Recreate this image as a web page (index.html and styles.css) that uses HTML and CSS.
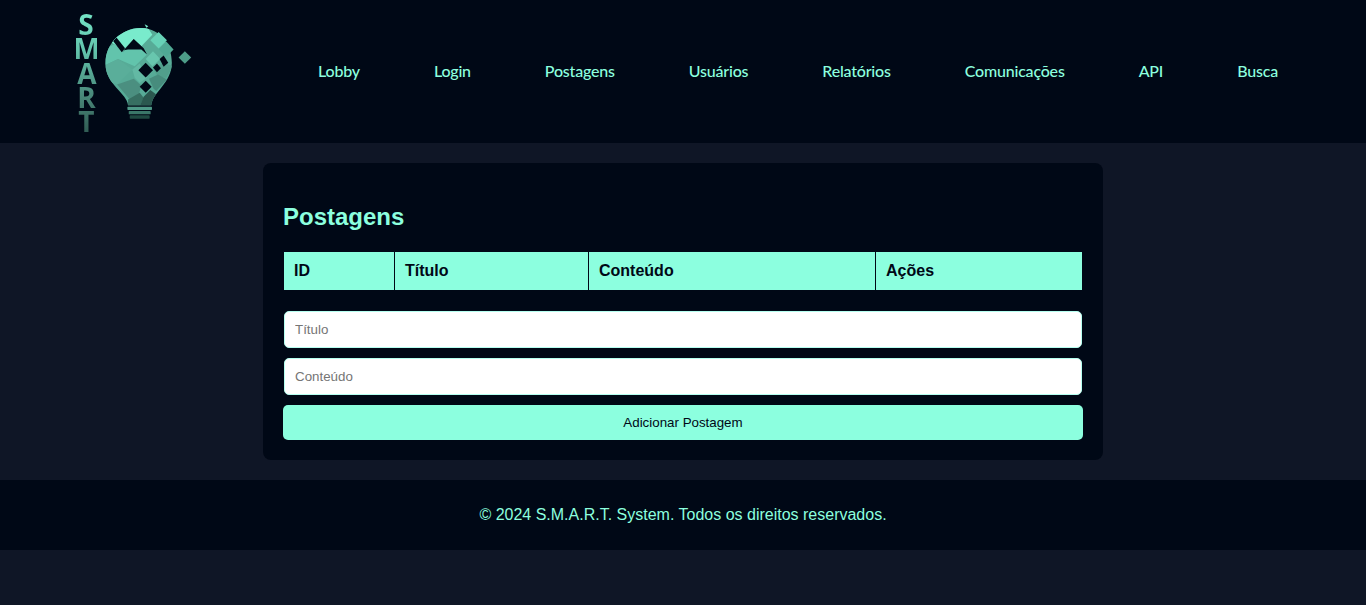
FILE: index.html
```html
<!DOCTYPE html>
<html lang="pt-BR">
<head>
<meta charset="UTF-8">
<meta name="viewport" content="width=device-width, initial-scale=1.0">
<title>Postagens</title>
<link rel="stylesheet" href="styles.css">
</head>
<body>

<header class="site-header">
  <a class="logo" href="#">
    <span class="logo-word">SMART</span>
    <svg class="logo-bulb" viewBox="130 70 270 295" aria-hidden="true">
      <defs>
        <clipPath id="bulbClip">
          <path d="M205 318C202 280 135 255 137 190C138 130 185 85 245 85C300 85 337 135 337 190C337 250 278 280 275 318Z"/>
        </clipPath>
      </defs>
      <g clip-path="url(#bulbClip)">
        <rect fill="#57ab97" x="130" y="80" width="215" height="245"/>
        <!-- facets, light at the top and darker towards the neck -->
        <polygon fill="#79ebcc" points="150,125 215,75 262,80 278,105 245,140 222,118 190,152"/>
        <polygon fill="#62c4ac" points="130,150 165,133 190,158 222,125 262,165 225,200 175,178 130,200"/>
        <polygon fill="#5aae9a" points="130,200 175,178 218,210 172,255 130,240"/>
        <polygon fill="#63b9a4" points="218,210 240,192 262,235 240,250 225,235"/>
        <polygon fill="#68c6ae" points="258,178 280,155 302,178 278,200"/>
        <polygon fill="#519f8c" points="280,207 312,190 340,200 320,235 295,232"/>
        <polygon fill="#478c7d" points="268,238 295,225 322,240 290,275 282,268"/>
        <polygon fill="#4b8f80" points="172,255 222,238 245,258 238,282 210,300"/>
        <polygon fill="#376f62" points="205,300 240,280 252,295 240,320 205,320"/>
        <polygon fill="#2b584f" points="252,292 272,272 290,285 275,320 240,320"/>
        <!-- dark squares cut out of the bulb -->
        <polygon fill="#000816" points="160,124 170,114 196,146 186,158"/>
        <polygon fill="#000816" points="192,152 222,118 252,146 262,165 245,150 205,150"/>
        <polygon fill="#000816" points="258,190 280,212 258,234 236,212"/>
        <polygon fill="#000816" points="258,244 276,262 258,280 240,262"/>
        <polygon fill="#000816" points="300,178 312,168 326,190 312,202"/>
        <polygon fill="#000816" points="280,204 292,192 304,206 292,218"/>
      </g>
      <polygon fill="#67d2b7" points="297,97 322,122 297,147 272,122"/>
      <polygon fill="#4fa994" points="320,126 342,150 320,172 298,150"/>
      <polygon fill="#4d9c88" points="376,155 395,174 376,193 357,174"/>
      <polygon fill="#79ebcc" points="255,74 266,80 260,84"/>
      <rect fill="#4f9a88" x="203" y="322" width="74" height="10" rx="2"/>
      <rect fill="#3a7668" x="207" y="335" width="66" height="10" rx="2"/>
      <rect fill="#1f4a42" x="210" y="348" width="60" height="10" rx="2"/>
    </svg>
  </a>
  <nav class="main-nav">
    <a href="#">Lobby</a>
    <a href="#">Login</a>
    <a href="#">Postagens</a>
    <a href="#">Usuários</a>
    <a href="#">Relatórios</a>
    <a href="#">Comunicações</a>
    <a href="#">API</a>
    <a href="#">Busca</a>
  </nav>
</header>

<main class="container">
  <h2>Postagens</h2>
  <table class="posts-table">
    <thead>
      <tr>
        <th class="col-id">ID</th>
        <th class="col-title">Título</th>
        <th class="col-content">Conteúdo</th>
        <th>Ações</th>
      </tr>
    </thead>
    <tbody></tbody>
  </table>
  <form class="post-form">
    <input type="text" placeholder="Título">
    <input type="text" placeholder="Conteúdo">
    <button type="submit">Adicionar Postagem</button>
  </form>
</main>

<footer class="site-footer">
  <p>© 2024 S.M.A.R.T. System. Todos os direitos reservados.</p>
</footer>

</body>
</html>
```

FILE: styles.css
```css
body {
  font-family: "Liberation Sans", Arial, sans-serif;
  margin: 0;
  background-color: #0f1626;
  color: #8cffdf;
}
.site-header {
  display: flex;
  align-items: center;
  height: 143px;
  background-color: #000816;
}
.logo {
  display: flex;
  flex: none;
  width: 318px;
  height: 143px;
  padding-left: 75px;
  box-sizing: border-box;
  text-decoration: none;
}
.logo-word {
  width: 22px;
  height: 130px;
  margin-top: 5px;
  writing-mode: vertical-rl;
  text-orientation: upright;
  font-family: "Open Sans", sans-serif;
  font-weight: 700;
  font-size: 28px;
  line-height: 22px;
  letter-spacing: -13.7px;
  background: linear-gradient(#79ebcc, #62c4ac 35%, #457f72 75%, #2f5a52);
  -webkit-background-clip: text;
  background-clip: text;
  color: transparent;
}
.logo-bulb {
  width: 90px;
  height: 98px;
  margin: 23px 0 0 6px;
}
.main-nav {
  display: flex;
  gap: 74px;
  margin-top: -2px;
}
.main-nav a {
  font-family: Lato, sans-serif;
  font-weight: 500;
  font-size: 16px;
  letter-spacing: -0.2px;
  color: #8cffdf;
  text-decoration: none;
}
.container {
  width: 800px;
  margin: 20px auto;
  padding: 20px;
  background-color: #000816;
  border-radius: 8px;
}
h2 {
  margin: 20px 0;
  font-size: 24px;
  line-height: 28px;
}
.posts-table {
  width: 100%;
  border-collapse: collapse;
  margin-bottom: 20px;
}
.posts-table th {
  height: 39px;
  padding: 0 10px;
  box-sizing: border-box;
  border: 1px solid #000816;
  background-color: #8cffdf;
  color: #000816;
  font-size: 16px;
  text-align: left;
}
.col-id { width: 111px; }
.col-title { width: 194px; }
.col-content { width: 287px; }
.post-form {
  display: flex;
  flex-direction: column;
  gap: 10px;
}
.post-form input {
  height: 37px;
  margin: 0 1px;
  padding: 0 10px;
  box-sizing: border-box;
  border: 1px solid #b5fff0;
  border-radius: 5px;
  background-color: white;
  font-family: "Liberation Sans", Arial, sans-serif;
  font-size: 13.33px;
}
.post-form button {
  height: 35px;
  padding: 0;
  background-color: #8cffdf;
  color: #000816;
  border: none;
  border-radius: 5px;
  font-family: "Liberation Sans", Arial, sans-serif;
  font-size: 13.33px;
  cursor: pointer;
}
.site-footer {
  height: 70px;
  background-color: #000816;
  display: flex;
  align-items: center;
  justify-content: center;
}
.site-footer p {
  margin: 0;
  font-size: 16px;
}
```
